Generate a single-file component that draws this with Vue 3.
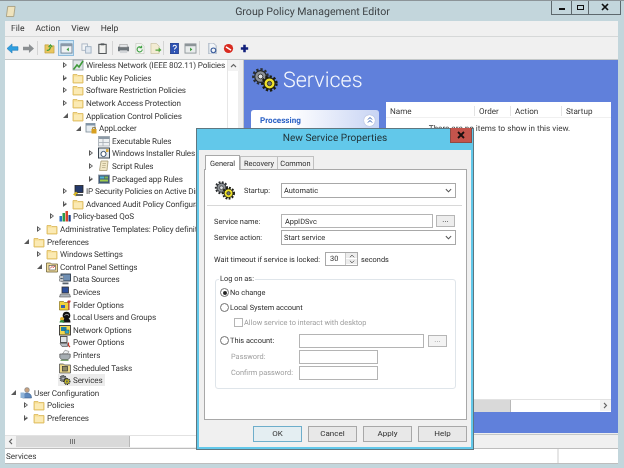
<template>
  <div class="window">
    <svg class="defs" xmlns="http://www.w3.org/2000/svg">
      <symbol id="i-folder" viewBox="0 0 12 12">
        <path d="M1 2.5h4l1 1h5V11H1z" fill="#f6dc8e" stroke="#d9b65c" stroke-width=".8" />
        <rect x="2" y="4.5" width="8" height="5.5" fill="#fbeab4" />
      </symbol>
      <symbol id="i-wifi" viewBox="0 0 12 12">
        <rect x="1" y="1" width="10" height="10" fill="#dfe6e8" stroke="#8b979c" stroke-width=".8" />
        <path d="M1.5 10.5 5 6l2 2 4-6" fill="none" stroke="#3e9a3a" stroke-width="1.6" />
      </symbol>
      <symbol id="i-lock" viewBox="0 0 12 12">
        <rect x="1" y="1.5" width="9" height="8.5" fill="#e8eef2" stroke="#7b8a96" stroke-width=".8" />
        <rect x="1" y="1.5" width="9" height="2" fill="#7f93a8" />
        <rect x="6.5" y="7" width="5" height="4.5" fill="#d8a020" />
        <path d="M7.6 7V5.6h2.8V7" fill="none" stroke="#8a6a20" stroke-width=".8" />
      </symbol>
      <symbol id="i-table" viewBox="0 0 12 12">
        <rect x=".5" y="1.5" width="11" height="9.5" fill="#eef1f3" stroke="#a2abb2" stroke-width=".8" />
        <rect x=".5" y="1.5" width="11" height="2.5" fill="#8d9aa6" />
        <path d="M5 4v7M1 7.5h10" stroke="#a2abb2" stroke-width=".8" />
      </symbol>
      <symbol id="i-installer" viewBox="0 0 12 12">
        <rect x=".5" y="1" width="11" height="10" fill="#e3e8ec" stroke="#3b4650" />
        <circle cx="5.5" cy="7" r="2.6" fill="#fff" stroke="#39506b" />
        <rect x="8" y="2" width="2.5" height="3" fill="#d9a93a" />
      </symbol>
      <symbol id="i-script" viewBox="0 0 12 12">
        <path d="M3 1h7l-1 9.5H1.5z" fill="#f2e8c7" stroke="#a59a74" stroke-width=".8" />
        <path d="M4.5 3.5h3.5M4.2 5.5h3.5M4 7.5h3.5" stroke="#a59a74" stroke-width=".6" />
      </symbol>
      <symbol id="i-package" viewBox="0 0 12 12">
        <rect x=".5" y="2" width="11" height="8.5" fill="#3f5a78" stroke="#8d99a3" stroke-width=".8" />
        <rect x="2" y="3.5" width="4" height="2" fill="#4fb6d6" />
        <rect x="6.5" y="3.5" width="3.5" height="2" fill="#7bb650" />
        <rect x="2" y="6.5" width="8" height="2" fill="#9ecb4c" />
      </symbol>
      <symbol id="i-ipsec" viewBox="0 0 12 12">
        <rect x="3" y=".5" width="8" height="7" fill="#24396b" stroke="#222" stroke-width=".8" />
        <path d="M1 9.5 4 6.5l2 2-2 3z" fill="#d4b324" />
        <rect x="4" y="9" width="7" height="2" fill="#5d6468" />
      </symbol>
      <symbol id="i-bars" viewBox="0 0 12 12">
        <rect x=".5" y="6" width="2.5" height="5.5" fill="#2d6fc4" />
        <rect x="3.5" y="3" width="2.5" height="8.5" fill="#2d9a46" />
        <rect x="6.5" y="1" width="2.5" height="10.5" fill="#d8442c" />
        <rect x="9.5" y="5" width="2.2" height="6.5" fill="#1d3f86" />
      </symbol>
      <symbol id="i-cpanel" viewBox="0 0 12 12">
        <path d="M.5 2h4l1 1h6v8H.5z" fill="#f1dc9c" stroke="#6e6338" stroke-width=".8" />
        <rect x="3" y="4.5" width="6.5" height="4.5" fill="#fff" stroke="#444" stroke-width=".6" />
        <path d="M4 7.5l2-2 1 1 2-1.5" stroke="#c43a2e" fill="none" stroke-width=".9" />
      </symbol>
      <symbol id="i-data" viewBox="0 0 12 12">
        <rect x="2" y="1" width="9.5" height="7" fill="#6f8fb3" stroke="#2e3a48" stroke-width=".9" />
        <rect x=".5" y="3" width="4" height="2" fill="#dfe5ea" stroke="#444" stroke-width=".4" />
        <rect x=".5" y="6" width="4" height="2" fill="#dfe5ea" stroke="#444" stroke-width=".4" />
        <rect x="3.5" y="9.5" width="6" height="1.8" fill="#59636c" />
      </symbol>
      <symbol id="i-device" viewBox="0 0 12 12">
        <rect x="3" y="1" width="6.5" height="6" fill="#2c4f9c" stroke="#333" stroke-width=".8" />
        <path d="M1.5 8h9l1 3H.5z" fill="#aeb6bd" stroke="#555" stroke-width=".6" />
      </symbol>
      <symbol id="i-foldopt" viewBox="0 0 12 12">
        <path d="M.5 2.5h4l1 1h4V11H.5z" fill="#f4d23a" stroke="#8a7420" stroke-width=".7" />
        <path d="M9 1.5h2.5V3l-1 1v7h-1V4L8 3z" fill="#c8362a" />
        <path d="M2 6h4v3H2z" fill="#3a5fb0" />
      </symbol>
      <symbol id="i-users" viewBox="0 0 12 12">
        <circle cx="7.5" cy="4.5" r="3.8" fill="#111" />
        <path d="M3.5 11.5c0-3 1.5-4.5 4-4.5s4 1.5 4 4.5z" fill="#111" />
        <circle cx="3" cy="8" r="2" fill="#e3b028" />
        <path d="M.5 11.5c.2-1.8 1.2-2.5 2.5-2.5s2.3.7 2.5 2.5z" fill="#2e8b3e" />
        <path d="M5.5 4.5c1.5-1.5 3-1.5 4.5 0" stroke="#eee" stroke-width=".7" fill="none" />
      </symbol>
      <symbol id="i-network" viewBox="0 0 12 12">
        <rect x=".5" y="1.5" width="11" height="9.5" fill="#f2d84f" stroke="#333" stroke-width=".9" />
        <rect x="2" y="3" width="5.5" height="4" fill="#1e7fa8" />
        <rect x="6" y="6" width="4" height="3.5" fill="#2ba6c9" stroke="#333" stroke-width=".4" />
      </symbol>
      <symbol id="i-power" viewBox="0 0 12 12">
        <rect x="1.5" y=".5" width="6.5" height="6" fill="#dfe4e8" stroke="#444" stroke-width=".9" />
        <path d="M1 7.5h7.5v3H3z" fill="#b7bec4" stroke="#444" stroke-width=".6" />
        <path d="M9.5 6.5v3l1.5 1.5" stroke="#c43a2e" stroke-width="1.2" fill="none" />
      </symbol>
      <symbol id="i-printer" viewBox="0 0 12 12">
        <path d="M3.5 5 6 1.2l4 1.3L8.5 5z" fill="#eceff1" stroke="#777" stroke-width=".6" />
        <path d="M.8 5h10.4v3.5L9 10.5H2.5L.8 8.5z" fill="#a6adb2" stroke="#555" stroke-width=".7" />
        <path d="M1.5 11.3h8" stroke="#5d9850" stroke-width="1" />
      </symbol>
      <symbol id="i-tasks" viewBox="0 0 12 12">
        <path d="M.5 2h4l1 1h6v8H.5z" fill="#ecd98a" stroke="#555" stroke-width=".8" />
        <rect x="3.5" y="4.5" width="5" height="4.5" fill="#8e8a66" stroke="#333" stroke-width=".7" />
      </symbol>
      <symbol id="i-gears" viewBox="0 0 28 24">
        <circle cx="9.5" cy="8.5" r="5.8" fill="#8c9196" stroke="#202326" stroke-width="1.2" />
        <circle cx="9.5" cy="8.5" r="7.2" fill="none" stroke="#2b2e31" stroke-width="2.4" stroke-dasharray="2.3 1.9" />
        <circle cx="9.5" cy="8.5" r="2.4" fill="#dfe2e4" stroke="#222" stroke-width=".8" />
        <circle cx="18.5" cy="15.5" r="5.6" fill="#efe22c" stroke="#202010" stroke-width="1.2" />
        <circle cx="18.5" cy="15.5" r="7" fill="none" stroke="#1c1c10" stroke-width="2.4" stroke-dasharray="2.3 1.8" />
        <circle cx="18.5" cy="15.5" r="2.2" fill="#6f7478" stroke="#222" stroke-width=".8" />
      </symbol>
      <symbol id="i-person" viewBox="0 0 12 12">
        <circle cx="7" cy="3" r="2.4" fill="#c9a27e" stroke="#6b7c90" stroke-width=".5" />
        <path d="M2.5 11c0-3.3 1.8-5 4.5-5s4.5 1.7 4.5 5z" fill="#5d88bd" stroke="#3e5f8c" stroke-width=".6" />
        <rect x=".5" y="5.5" width="4" height="5.5" fill="#8fb3d8" />
      </symbol>
    </svg>

    <header class="titlebar">
      <svg class="app-icon" viewBox="0 0 12 14">
        <path d="M3 1.5h8l-1.5 11h-8z" fill="#efe3bd" stroke="#9c9270" stroke-width=".8" />
      </svg>
      <span class="title">Group Policy Management Editor</span>
      <div class="win-controls">
        <span class="wc wc-min"><i></i></span>
        <span class="wc wc-max"><i></i></span>
        <span class="wc wc-close">
          <svg viewBox="0 0 8 8" width="8" height="8"><path d="M1 1l6 6M7 1 1 7" stroke="#111" stroke-width="1.7" /></svg>
        </span>
      </div>
    </header>

    <nav class="menubar">
      <span v-for="m in menus" :key="m">{{ m }}</span>
    </nav>

    <div class="toolbar">
      <div class="tb-group g1 sep">
        <span class="tb">
          <svg viewBox="0 0 14 12"><path d="M1 6l5.5-5v3H13v4H6.5v3z" fill="#2f9fe0" stroke="#1a76b5" stroke-width=".6" /></svg>
        </span>
        <span class="tb">
          <svg viewBox="0 0 14 12"><path d="M13 6 7.5 1v3H1v4h6.5v3z" fill="#8b8f92" /></svg>
        </span>
      </div>
      <div class="tb-group g2">
        <span class="tb">
          <svg viewBox="0 0 14 12"><path d="M2 2h4l1 1h5v8H2z" fill="#eac65f" stroke="#b59330" stroke-width=".6" /><path d="M4 8c3 0 4-1 4-4M6 4.5l2-2.5 2 2.5" fill="none" stroke="#3d9d3a" stroke-width="1.3" /></svg>
        </span>
        <span class="tb active">
          <svg viewBox="0 0 14 12"><rect x="1" y="1" width="12" height="10" fill="#eef1f3" stroke="#6f8194" /><rect x="1" y="1" width="12" height="2.5" fill="#8a99a8" /><path d="M9.5 5v4L7 7z" fill="#3a9a3a" /></svg>
        </span>
      </div>
      <div class="tb-group g3 sep">
        <span class="tb">
          <svg viewBox="0 0 14 12"><rect x="2" y="1" width="6" height="7" fill="#f2f4f6" stroke="#a9b5c2" /><rect x="6" y="4" width="6" height="7" fill="#dfe7f0" stroke="#9fb0c2" /></svg>
        </span>
        <span class="tb">
          <svg viewBox="0 0 14 12"><rect x="3" y="1.5" width="8" height="10" fill="#f2f2f0" stroke="#54585a" stroke-width="1.2" /><rect x="5" y=".5" width="4" height="2" fill="#54585a" /></svg>
        </span>
      </div>
      <div class="tb-group g4 sep">
        <span class="tb">
          <svg viewBox="0 0 14 12"><rect x="1" y="4" width="12" height="5" fill="#6d7479" /><rect x="3" y="1.5" width="8" height="3" fill="#e6e8ea" stroke="#888" stroke-width=".5" /><rect x="3" y="8" width="8" height="3" fill="#d2d5d8" /></svg>
        </span>
        <span class="tb">
          <svg viewBox="0 0 14 12"><path d="M3 .5h6l3 3v8H3z" fill="#f3f5f1" stroke="#b8bdb2" stroke-width=".6" /><path d="M10 7a2.8 2.8 0 1 1-1-2.2M9.3 3v2.2H7" fill="none" stroke="#3ea043" stroke-width="1.2" /></svg>
        </span>
        <span class="tb">
          <svg viewBox="0 0 14 12"><path d="M2 .5h6l3 3v8H2z" fill="#f2ebd2" stroke="#bdb38f" stroke-width=".6" /><path d="M7 7h3.5V5l3 2.5-3 2.5V8.5H7z" fill="#53a83f" /></svg>
        </span>
      </div>
      <div class="tb-group g5 sep">
        <span class="tb">
          <svg viewBox="0 0 14 12"><rect x="2.5" y="0" width="9" height="12" fill="#2f54b4" stroke="#1c3378" stroke-width=".7" /><path d="M5.5 4c0-2 3.5-2 3.5 0 0 1.5-2 1.5-2 3M7 9v1.2" fill="none" stroke="#fff" stroke-width="1.1" /></svg>
        </span>
        <span class="tb">
          <svg viewBox="0 0 14 12"><rect x="1" y="1" width="12" height="10" fill="#e9ecec" stroke="#8c9498" /><rect x="1" y="1" width="12" height="2.5" fill="#8d9498" /><path d="M6.5 5v4L9 7z" fill="#3a9a3a" /></svg>
        </span>
      </div>
      <div class="tb-group">
        <span class="tb">
          <svg viewBox="0 0 14 12"><path d="M3 0h5l3 3v9H3z" fill="#f2f5f8" stroke="#7d8fa6" stroke-width=".7" /><circle cx="8" cy="8" r="2.6" fill="none" stroke="#3d5e9c" stroke-width="1.2" /></svg>
        </span>
        <span class="tb">
          <svg viewBox="0 0 14 12"><circle cx="7" cy="6" r="5" fill="#d92b20" /><path d="M4.2 4.2l5.600 3.600" stroke="#fff" stroke-width="1.6" /></svg>
        </span>
        <span class="tb">
          <svg viewBox="0 0 14 12"><path d="M7 2v8M3 6h8" stroke="#12207c" stroke-width="2.8" /></svg>
        </span>
      </div>
    </div>

    <div class="workspace">
      <aside class="tree-pane">
        <div class="tree-body">
          <ul class="tree">
            <li v-for="row in rows" :key="row.id" class="tree-row" :style="{ paddingLeft: row.lvl * 13 + 5 + 'px' }">
              <span class="twisty" :class="row.tw"></span>
              <span class="tree-item" :class="{ selected: row.selected }">
                <svg class="tree-ico"><use :href="'#i-' + row.icon" /></svg>
                <span class="tree-label">{{ row.text }}</span>
              </span>
            </li>
          </ul>
          <div class="tree-vscroll">
            <span class="sb-btn">
              <svg viewBox="0 0 7 5" width="7" height="5"><path d="M1 4l2.5-2.5L6 4" fill="none" stroke="#666" stroke-width="1.1" /></svg>
            </span>
          </div>
        </div>
        <div class="tree-hscroll">
          <span class="sb-btn">
            <svg viewBox="0 0 5 7" width="5" height="7"><path d="M4 1 1.5 3.5 4 6" fill="none" stroke="#666" stroke-width="1.1" /></svg>
          </span>
          <span class="sb-thumb"><i></i></span>
        </div>
      </aside>

      <section class="right-side">
        <div class="blue-pane">
          <div class="blue-left">
            <div class="pane-head">
              <svg class="head-gears"><use href="#i-gears" /></svg>
              <span class="head-title">Services</span>
            </div>
            <div class="task-card">
              <span>Processing</span>
              <span class="chev">
                <svg viewBox="0 0 8 8" width="8" height="8"><path d="M2 3.5l2-2 2 2M2 6.5l2-2 2 2" fill="none" stroke="#2a57b0" stroke-width="1" /></svg>
              </span>
            </div>
          </div>
          <div class="list">
            <div class="list-head">
              <span class="c-name">Name</span>
              <span class="c-order">Order</span>
              <span class="c-action">Action</span>
              <span class="c-startup">Startup</span>
            </div>
            <div class="list-empty">There are no items to show in this view.</div>
            <div class="list-hscroll">
              <span class="list-thumb"></span>
              <span class="sb-btn">
                <svg viewBox="0 0 5 7" width="5" height="7"><path d="M1 1l2.5 2.5L1 6" fill="none" stroke="#666" stroke-width="1.1" /></svg>
              </span>
            </div>
          </div>
        </div>
        <div class="under-bar"></div>
      </section>
    </div>

    <footer class="statusbar">
      <span class="st-main">Services</span>
      <span class="st-side"></span>
    </footer>

    <div class="dialog">
      <div class="dlg-title">
        <span>New Service Properties</span>
        <span class="dlg-close">
          <svg viewBox="0 0 8 8" width="8" height="8"><path d="M1 1l6 6M7 1 1 7" stroke="#1a1010" stroke-width="1.8" /></svg>
        </span>
      </div>
      <div class="dlg-body">
        <div class="tabs">
          <span class="tab on">General</span>
          <span class="tab t-rec">Recovery</span>
          <span class="tab t-com">Common</span>
        </div>
        <div class="tab-panel">
          <div class="startup-row">
            <svg class="dlg-gears"><use href="#i-gears" /></svg>
            <label class="startup-label">Startup:</label>
            <div class="select wide">Automatic<svg class="caret" viewBox="0 0 8 5"><path d="M1 1l3 3 3-3" fill="none" stroke="#555" stroke-width="1.2" /></svg></div>
          </div>
          <div class="rule"></div>
          <div class="form-row name-row">
            <label>Service name:</label>
            <div class="input name">AppIDSvc</div>
            <span class="dots">...</span>
          </div>
          <div class="form-row">
            <label>Service action:</label>
            <div class="select wide">Start service<svg class="caret" viewBox="0 0 8 5"><path d="M1 1l3 3 3-3" fill="none" stroke="#555" stroke-width="1.2" /></svg></div>
          </div>
          <div class="wait-row">
            <label>Wait timeout if service is locked:</label>
            <div class="spin">
              <span class="spin-val">30</span>
              <span class="spin-btns">
                <i><svg viewBox="0 0 7 4" width="6" height="4"><path d="M1 3.5 3.5 1 6 3.5" fill="none" stroke="#555" /></svg></i>
                <i><svg viewBox="0 0 7 4" width="6" height="4"><path d="M1 .5 3.5 3 6 .5" fill="none" stroke="#555" /></svg></i>
              </span>
            </div>
            <span>seconds</span>
          </div>
          <fieldset class="logon">
            <legend>Log on as:</legend>
            <div class="opt first-opt"><span class="radio on"></span>No change</div>
            <div class="opt"><span class="radio"></span>Local System account</div>
            <div class="opt sub muted"><span class="check"></span>Allow service to interact with desktop</div>
            <div class="acct-row">
              <div class="opt acct"><span class="radio"></span>This account:</div>
              <div class="input acct-input"></div>
              <span class="dots dim">...</span>
            </div>
            <div class="pw-row muted"><label>Password:</label><div class="input pw"></div></div>
            <div class="pw-row muted"><label>Confirm password:</label><div class="input pw"></div></div>
          </fieldset>
        </div>
        <div class="dlg-buttons">
          <button class="default">OK</button>
          <button>Cancel</button>
          <button>Apply</button>
          <button>Help</button>
        </div>
      </div>
    </div>
  </div>
</template>

<script setup>
const menus = ['File', 'Action', 'View', 'Help']

// lvl 0 is the twisty column for "User Configuration"
const tree = [
  [4, 'c', 'wifi', 'Wireless Network (IEEE 802.11) Policies'],
  [4, 'c', 'folder', 'Public Key Policies'],
  [4, 'c', 'folder', 'Software Restriction Policies'],
  [4, 'c', 'folder', 'Network Access Protection'],
  [4, 'e', 'folder', 'Application Control Policies'],
  [5, 'e', 'lock', 'AppLocker'],
  [6, '', 'table', 'Executable Rules'],
  [6, 'c', 'installer', 'Windows Installer Rules'],
  [6, 'c', 'script', 'Script Rules'],
  [6, 'c', 'package', 'Packaged app Rules'],
  [4, 'c', 'ipsec', 'IP Security Policies on Active Directory'],
  [4, 'c', 'folder', 'Advanced Audit Policy Configuration'],
  [3, 'c', 'bars', 'Policy-based QoS'],
  [2, 'c', 'folder', 'Administrative Templates: Policy definitions'],
  [1, 'e', 'folder', 'Preferences'],
  [2, 'c', 'folder', 'Windows Settings'],
  [2, 'e', 'cpanel', 'Control Panel Settings'],
  [3, '', 'data', 'Data Sources'],
  [3, '', 'device', 'Devices'],
  [3, '', 'foldopt', 'Folder Options'],
  [3, '', 'users', 'Local Users and Groups'],
  [3, '', 'network', 'Network Options'],
  [3, '', 'power', 'Power Options'],
  [3, '', 'printer', 'Printers'],
  [3, '', 'tasks', 'Scheduled Tasks'],
  [3, '', 'gears', 'Services', true],
  [0, 'e', 'person', 'User Configuration'],
  [1, 'c', 'folder', 'Policies'],
  [1, 'c', 'folder', 'Preferences']
]

const rows = tree.map(([lvl, tw, icon, text, selected], id) => ({ id, lvl, tw, icon, text, selected }))
</script>

<style>
html,
body {
  margin: 0;
  background: #c3d6dc;
}
</style>

<style scoped>
.window {
  position: relative;
  width: 624px;
  height: 468px;
  overflow: hidden;
  display: flex;
  flex-direction: column;
  box-sizing: border-box;
  padding: 1px 6px 4px 5px;
  background: #c3d6dc;
  border-top: 1px solid #8c9498;
  font-family: Roboto, 'Noto Sans', sans-serif;
  font-size: 8.1px;
  text-rendering: geometricPrecision;
  color: #383838;
  filter: blur(0.4px);
}

.defs {
  display: none;
}

/* title bar */
.titlebar {
  height: 18px;
  position: relative;
  display: flex;
  align-items: center;
  justify-content: center;
}

.app-icon {
  position: absolute;
  left: 0;
  top: 3px;
  width: 11px;
  height: 13px;
}

.title {
  font-size: 10.6px;
  color: #3f4447;
  margin-left: 2px;
}

.win-controls {
  position: absolute;
  right: -3px;
  top: -2px;
  display: flex;
  border: 1px solid #5d686d;
  border-top: none;
  height: 14px;
}

.wc {
  width: 19px;
  display: flex;
  align-items: center;
  justify-content: center;
  border-right: 1px solid #5d686d;
}

.wc-max {
  width: 16px;
}

.wc-close {
  width: 31px;
  border-right: none;
}

.wc-min i {
  width: 6px;
  height: 2px;
  margin-top: 3px;
  background: #111;
}

.wc-max i {
  width: 5px;
  height: 3px;
  border: 1.5px solid #111;
}

/* menu + toolbar */
.menubar {
  height: 15px;
  margin-top: 1px;
  background: #f0f0f0;
  display: flex;
  align-items: center;
  padding-left: 6px;
  gap: 11px;
  font-size: 8.6px;
  border-bottom: 1px solid #d6d8d8;
}

.toolbar {
  height: 22px;
  background: #f0f0f0;
  display: flex;
  align-items: center;
}

.tb-group {
  display: flex;
  align-items: center;
}

.g1 {
  margin-left: -1px;
  padding-right: 2px;
  margin-right: 3px;
}

.g2 {
  margin-right: 4px;
}

.g3 {
  padding-right: 3px;
  margin-right: 2px;
}

.g4 {
  padding-right: 1px;
  margin-right: 2px;
}

.g5 {
  padding-right: 2px;
  margin-right: 4px;
}

.sep {
  position: relative;
}

.sep::after {
  content: '';
  position: absolute;
  right: 0;
  top: 1px;
  bottom: 1px;
  width: 1px;
  background: #d4d4d4;
}

.tb {
  width: 16px;
  height: 16px;
  display: flex;
  align-items: center;
  justify-content: center;
  box-sizing: border-box;
}

.tb svg {
  width: 13px;
  height: 11px;
}

.tb.active {
  margin-left: 1px;
  background: #cfe6f5;
  border: 1px solid #8fbcdc;
}

/* main area */
.workspace {
  flex: 1;
  display: flex;
  min-height: 0;
  background: #eeeeee;
  border-top: 1px solid #c4c8c8;
}

.tree-pane {
  width: 233px;
  display: flex;
  flex-direction: column;
  background: #fff;
  margin-bottom: 1px;
}

.tree-body {
  flex: 1;
  display: flex;
  min-height: 0;
}

.tree {
  flex: 1;
  list-style: none;
  margin: -1px 0 0;
  padding: 0;
  overflow: hidden;
  min-width: 0;
}

.tree-row {
  height: 12.6px;
  display: flex;
  align-items: center;
  white-space: nowrap;
}

.twisty {
  width: 7px;
  height: 7px;
  flex: none;
  position: relative;
}

.twisty.c::before {
  content: '';
  position: absolute;
  left: 1px;
  top: .5px;
  border-left: 4px solid #555;
  border-top: 3px solid transparent;
  border-bottom: 3px solid transparent;
}

.twisty.c::after {
  content: '';
  position: absolute;
  left: 2px;
  top: 2px;
  border-left: 2px solid #fff;
  border-top: 1.5px solid transparent;
  border-bottom: 1.5px solid transparent;
}

.twisty.e::before {
  content: '';
  position: absolute;
  left: 1px;
  top: 1px;
  border-right: 5px solid #595959;
  border-top: 5px solid transparent;
}

.tree-item {
  display: flex;
  align-items: center;
  margin-left: 2px;
  padding-left: 1px;
}

.tree-item.selected {
  background: #ececec;
  padding-right: 2px;
}

.tree-ico {
  width: 12px;
  height: 12px;
  flex: none;
}

.tree-label {
  margin-left: 2px;
  line-height: 12px;
  letter-spacing: -0.12px;
}

.tree-vscroll {
  width: 10px;
  flex: none;
  background: #fff;
  border-left: 1px solid #e6e6e6;
}

.sb-btn {
  width: 11px;
  height: 11px;
  display: flex;
  align-items: center;
  justify-content: center;
  background: #f2f2f2;
  flex: none;
}

.tree-hscroll {
  height: 11px;
  display: flex;
  border-top: 1px solid #e2e2e2;
  margin-right: 10px;
}

.sb-thumb {
  width: 113px;
  background: #d9d9d9;
  border-right: 1px solid #b8b8b8;
  display: flex;
  align-items: center;
  justify-content: center;
}

.sb-thumb i {
  width: 6px;
  height: 5px;
  background: repeating-linear-gradient(90deg, #777 0 1px, transparent 1px 2px);
}

.right-side {
  flex: 1;
  display: flex;
  flex-direction: column;
  margin-left: 5px;
  border-left: 1px solid #c4c8c8;
}

.blue-pane {
  flex: 1;
  background: #6080db;
  display: flex;
  padding: 0 7px 21px 7px;
  min-height: 0;
}

.blue-left {
  width: 128px;
  margin-right: 7px;
}

.pane-head {
  height: 50px;
  display: flex;
  align-items: center;
}

.head-gears {
  width: 28px;
  height: 24px;
  flex: none;
  margin-top: -10px;
}

.head-title {
  margin: -10px 0 0 4px;
  font-size: 21.5px;
  font-weight: 300;
  color: #f4f7fd;
  white-space: nowrap;
}

.task-card {
  height: 20px;
  box-sizing: border-box;
  display: flex;
  align-items: center;
  justify-content: space-between;
  padding: 0 4px 0 9px;
  border-radius: 3px 3px 0 0;
  background: linear-gradient(90deg, #fff 30%, #c8d4f4);
  color: #2d63c6;
  font-weight: 700;
}

.chev {
  width: 11px;
  height: 11px;
  border-radius: 50%;
  background: #fff;
  display: flex;
  align-items: center;
  justify-content: center;
  box-shadow: 0 0 1px #7f8fb8;
}

.list {
  flex: 1;
  margin-top: 42px;
  background: #fff;
  display: flex;
  flex-direction: column;
  position: relative;
}

.list-head {
  height: 13px;
  padding-top: 2px;
  display: flex;
  align-items: center;
  border-bottom: 1px solid #f0f0f0;
}

.list-head span {
  box-sizing: border-box;
  padding-left: 4px;
  border-right: 1px solid #e3e3e3;
}

.c-name { width: 89px; }
.c-order { width: 36px; }
.c-action { width: 51px; }
.c-startup { flex: 1; border-right: none !important; }

.list-empty {
  flex: 1;
  text-align: center;
  padding-top: 5px;
  padding-left: 2px;
}

.list-hscroll {
  height: 12px;
  display: flex;
  justify-content: space-between;
  border-top: 1px solid #e2e2e2;
  background: #fff;
}

.list-thumb {
  width: 124px;
  background: #d9d9d9;
  border-right: 1px solid #b8b8b8;
}

.under-bar {
  height: 13px;
  margin-top: 1px;
  background: #f0f0f0;
  border-top: 1px solid #c4c8c8;
}

.statusbar {
  height: 16px;
  display: flex;
  background: #fff;
  box-sizing: border-box;
  border-top: 1px solid #bdbdbd;
  border-bottom: 1px solid #bdbdbd;
  align-items: center;
}

.st-main {
  flex: 1;
  padding-left: 1px;
}

.st-side {
  width: 59px;
  height: 100%;
  border-left: 2px solid #e6e6e6;
}

/* dialog floats over the main window */
.dialog {
  position: absolute;
  left: 196px;
  top: 127px;
  width: 278px;
  height: 322px;
  box-sizing: border-box;
  background: #62c8ea;
  border: 1px solid #5f7780;
  display: flex;
  flex-direction: column;
  padding: 0 2px 2px 2px;
  font-size: 7.4px;
  color: #2e2e2e;
}

.dlg-title {
  height: 21px;
  flex: none;
  position: relative;
  display: flex;
  align-items: center;
  justify-content: center;
  padding-bottom: 2px;
  box-sizing: border-box;
  font-size: 10.1px;
  color: #23363c;
}

.dlg-close {
  position: absolute;
  right: -1px;
  top: -1px;
  width: 22px;
  height: 15px;
  background: #c4544c;
  display: flex;
  align-items: center;
  justify-content: center;
  border: 1px solid #8f4a44;
  border-top: none;
  box-sizing: border-box;
}

.dlg-body {
  flex: 1;
  background: #f0f0f0;
  display: flex;
  flex-direction: column;
  padding: 3px 4px 0 5px;
  min-height: 0;
}

.tabs {
  display: flex;
  height: 16px;
  flex: none;
  align-items: flex-end;
  position: relative;
  z-index: 1;
}

.tab {
  height: 13px;
  box-sizing: border-box;
  display: flex;
  align-items: center;
  justify-content: center;
  border: 1px solid #c0c0c0;
  border-bottom: none;
  background: #f0f0f0;
}

.tab.on {
  width: 35px;
  height: 15px;
  margin-left: 1px;
  background: #fff;
  margin-bottom: -1px;
  border-color: #a8a8a8;
}

.t-rec {
  width: 38px;
}

.t-com {
  width: 37px;
  margin-left: -1px;
}

.tab-panel {
  flex: 1;
  background: #fff;
  border: 1px solid #a8a8a8;
  padding: 0 9px;
  min-height: 0;
  display: flex;
  flex-direction: column;
  box-sizing: border-box;
}

.startup-row {
  height: 35px;
  flex: none;
  box-sizing: border-box;
  display: flex;
  align-items: center;
  padding-top: 5px;
}

.dlg-gears {
  width: 22px;
  height: 19px;
  flex: none;
}

.startup-label {
  margin-left: 8px;
  width: 37px;
}

.select {
  height: 15px;
  box-sizing: border-box;
  border: 1px solid #a8a8a8;
  background: #fff;
  padding-left: 2px;
  display: flex;
  align-items: center;
  position: relative;
}

.select.wide {
  width: 175px;
}

.caret {
  position: absolute;
  right: 3px;
  top: 4px;
  width: 7px;
  height: 5px;
}

.rule {
  height: 1px;
  flex: none;
  background: #d8d8d8;
  margin: 0 -5px 0 -7px;
}

.form-row {
  height: 16px;
  flex: none;
  display: flex;
  align-items: center;
}

.name-row {
  margin-top: 7px;
}

.form-row label {
  width: 67px;
  flex: none;
}

.input {
  height: 14px;
  box-sizing: border-box;
  border: 1px solid #b4b4b4;
  background: #fff;
  padding-left: 3px;
  display: flex;
  align-items: center;
}

.input.name {
  width: 152px;
}

.dots {
  width: 19px;
  height: 12px;
  margin-left: 3px;
  box-sizing: border-box;
  border: 1px solid #b6b6b6;
  background: #ededed;
  display: flex;
  align-items: flex-start;
  justify-content: center;
  line-height: 8px;
  font-size: 8px;
  flex: none;
}

.dots.dim {
  color: #999;
  background: #f3f3f3;
  margin-left: 4px;
}

.wait-row {
  display: flex;
  flex: none;
  align-items: center;
  margin-top: 6px;
  height: 16px;
}

.wait-row label {
  width: 111px;
  flex: none;
  white-space: nowrap;
}

.spin {
  width: 33px;
  height: 14px;
  box-sizing: border-box;
  border: 1px solid #a8a8a8;
  margin-right: 3px;
  display: flex;
  justify-content: space-between;
}

.spin-val {
  padding-left: 4px;
  line-height: 12px;
}

.spin-btns {
  width: 11px;
  display: flex;
  flex-direction: column;
  border-left: 1px solid #c8c8c8;
}

.spin-btns i {
  flex: 1;
  background: #ececec;
  display: flex;
  align-items: center;
  justify-content: center;
  border-bottom: 1px solid #fff;
}

.logon {
  margin: 7px 0 0 1px;
  padding: 0;
  width: 241px;
  height: 115px;
  box-sizing: border-box;
  border: 1px solid #dfe5ea;
  border-radius: 3px;
  min-width: 0;
}

.logon legend {
  padding: 0 1px;
  margin-left: 3px;
  line-height: 10px;
}

.opt {
  display: flex;
  align-items: center;
  height: 15px;
  padding-left: 4px;
  white-space: nowrap;
}

.first-opt {
  margin-top: 1px;
}

.radio {
  width: 7px;
  height: 7px;
  margin-right: 1px;
  border: 1px solid #6f6f6f;
  border-radius: 50%;
  position: relative;
  flex: none;
}

.radio.on::after {
  content: '';
  position: absolute;
  left: 1.5px;
  top: 1.5px;
  width: 4px;
  height: 4px;
  border-radius: 50%;
  background: #222;
}

.opt.sub {
  padding-left: 18px;
}

.muted,
.opt.muted {
  color: #a0a0a0;
}

.check {
  width: 7px;
  height: 7px;
  margin-right: 1px;
  border: 1px solid #b5b5b5;
  flex: none;
}

.acct-row {
  display: flex;
  align-items: center;
  margin-top: 3px;
  height: 15px;
}

.opt.acct {
  width: 83px;
  box-sizing: border-box;
}

.acct-input {
  width: 125px;
}

.pw-row {
  display: flex;
  align-items: center;
  height: 15px;
  margin-top: 1px;
}

.pw-row label {
  width: 83px;
  padding-left: 15px;
  box-sizing: border-box;
  flex: none;
  white-space: nowrap;
}

.input.pw {
  width: 79px;
  height: 14px;
}

.dlg-buttons {
  height: 27px;
  flex: none;
  display: flex;
  justify-content: flex-end;
  align-items: center;
  gap: 6px;
}

.dlg-buttons button {
  width: 49px;
  height: 16px;
  padding: 0;
  font: inherit;
  font-size: 8px;
  color: #2e2e2e;
  background: #e8e8e8;
  border: 1px solid #a8a8a8;
}

.dlg-buttons button.default {
  background: #e4eef2;
  border-color: #6eaecb;
}
</style>
